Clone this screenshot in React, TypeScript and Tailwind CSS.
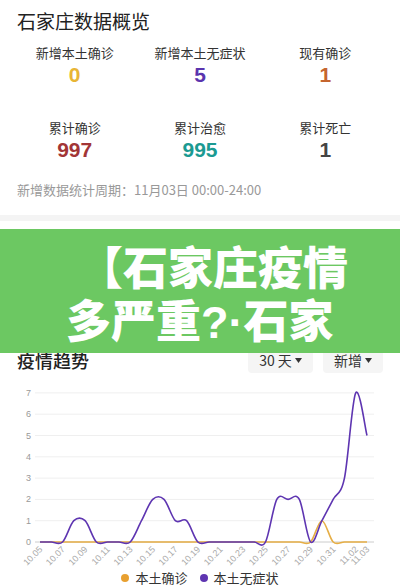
const days = Array.from({ length: 30 }, (_, i) => {
  const d = new Date(2021, 9, 5 + i)
  return `${d.getMonth() + 1}.${String(d.getDate()).padStart(2, '0')}`
})

const confirmed = days.map((_, i) => (i === 25 ? 1 : 0))
const asymptomatic = [0, 0, 0, 1, 1, 0, 0, 0, 0, 1, 2, 2, 1, 1, 0, 0, 0, 0, 0, 0, 0, 2, 2, 2, 0, 1, 2, 3, 7, 5]

const X0 = 40
const STEP = (367 - 40) / 29
const yOf = (v: number) => 162 - v * 21.3
const xOf = (i: number) => X0 + i * STEP

// catmull-rom -> bezier
const smooth = (vals: number[]) => {
  const pts = vals.map((v, i) => [xOf(i), yOf(v)])
  let d = `M${pts[0][0]},${pts[0][1]}`
  for (let i = 0; i < pts.length - 1; i++) {
    const p0 = pts[i - 1] ?? pts[i]
    const p1 = pts[i]
    const p2 = pts[i + 1]
    const p3 = pts[i + 2] ?? p2
    const c1x = p1[0] + (p2[0] - p0[0]) / 6
    const c1y = p1[1] + (p2[1] - p0[1]) / 6
    const c2x = p2[0] - (p3[0] - p1[0]) / 6
    const c2y = p2[1] - (p3[1] - p1[1]) / 6
    d += ` C${c1x},${c1y} ${c2x},${c2y} ${p2[0]},${p2[1]}`
  }
  return d
}

const xLabels = [0, 2, 4, 6, 8, 10, 12, 14, 16, 18, 20, 22, 24, 26, 28, 29]

const stats = [
  { label: '新增本土确诊', value: '0', color: 'text-[#e8b535]' },
  { label: '新增本土无症状', value: '5', color: 'text-[#5a34ae]' },
  { label: '现有确诊', value: '1', color: 'text-[#c5652f]' },
  { label: '累计确诊', value: '997', color: 'text-[#a23536]' },
  { label: '累计治愈', value: '995', color: 'text-[#1b9a92]' },
  { label: '累计死亡', value: '1', color: 'text-[#444444]' },
]

const Caret = () => (
  <svg width="7" height="5" viewBox="0 0 7 5" className="ml-[3px]">
    <path d="M0 0 H7 L3.5 5 Z" fill="#333" />
  </svg>
)

const TrendChart = () => (
  <svg width="400" height="192" className="block">
    {[0, 1, 2, 3, 4, 5, 6, 7].map((v) => (
      <g key={v}>
        <line x1="35" x2="374" y1={yOf(v)} y2={yOf(v)} stroke={v === 0 ? '#cccccc' : '#efefef'} strokeWidth="1" />
        <text x="31" y={yOf(v) + 3} textAnchor="end" fontSize="9" fill="#999" fontFamily="Liberation Sans, sans-serif">
          {v}
        </text>
      </g>
    ))}
    {xLabels.map((i) => (
      <text
        key={i}
        x={xOf(i) + 3}
        y={170}
        textAnchor="end"
        fontSize="9"
        fill="#aaa"
        fontFamily="Liberation Sans, sans-serif"
        transform={`rotate(-45 ${xOf(i) + 3} 170)`}
      >
        {days[i]}
      </text>
    ))}
    <path d={smooth(confirmed)} fill="none" stroke="#e6ae45" strokeWidth="1.6" />
    <path d={smooth(asymptomatic)} fill="none" stroke="#5e35b1" strokeWidth="1.6" />
  </svg>
)

export default function App() {
  return (
    <div className="relative h-[587px] w-[400px] overflow-hidden bg-white font-['Noto_Sans_CJK_SC',sans-serif] text-[#333]">
      <div className="pt-[8px]">
        <h1 className="px-[17px] text-[19px] leading-[26px] text-[#222]">石家庄数据概览</h1>
        <div className="mt-[10px] grid grid-cols-3 gap-y-[31px] px-3">
          {stats.map((s) => (
            <div key={s.label} className="flex flex-col items-center">
              <span className="text-[13px] leading-[18px] text-[#333]">{s.label}</span>
              <span className={`font-['Liberation_Sans',sans-serif] text-[21px] font-bold leading-[26px] ${s.color}`}>{s.value}</span>
            </div>
          ))}
        </div>
        <p className="mt-[18px] px-[17px] text-[13px] leading-[18px] text-[#999]">新增数据统计周期：11月03日 00:00-24:00</p>
      </div>
      <div className="mt-[16px] h-[6px] bg-[#f4f4f4]" />

      <div className="mt-[126px] flex items-center justify-between pl-[17px] pr-[17px]">
        <h2 className="text-[18px] font-medium leading-[26px] text-[#222]">疫情趋势</h2>
        <div className="flex gap-[10px]">
          <div className="flex h-[26px] w-[65px] items-center justify-center rounded bg-[#f5f5f5] text-[14px] text-[#333]">
            30 天<Caret />
          </div>
          <div className="flex h-[26px] w-[60px] items-center justify-center rounded bg-[#f5f5f5] text-[14px] text-[#333]">
            新增<Caret />
          </div>
        </div>
      </div>

      <div className="mt-[7px]">
        <TrendChart />
      </div>
      <div className="-mt-[2px] flex items-center justify-center gap-[12px] text-[13px] leading-[16px] text-[#333]">
        <span className="flex items-center gap-[6px]">
          <span className="h-[8px] w-[8px] rounded-full bg-[#e8a030]" />
          本土确诊
        </span>
        <span className="flex items-center gap-[6px]">
          <span className="h-[8px] w-[8px] rounded-full bg-[#5e35b1]" />
          本土无症状
        </span>
      </div>

      <div className="absolute left-0 top-[229px] h-[124px] w-full bg-[#6cc862] pt-[10px] font-black text-white">
        <div className="whitespace-nowrap pl-[78px] text-[45px] leading-[53px]">【石家庄疫情</div>
        <div className="whitespace-nowrap pl-[66px] text-[45px] leading-[53px]">
          多严重<span className="font-['Liberation_Sans',sans-serif] font-bold">?·</span>石家
        </div>
      </div>
    </div>
  )
}
